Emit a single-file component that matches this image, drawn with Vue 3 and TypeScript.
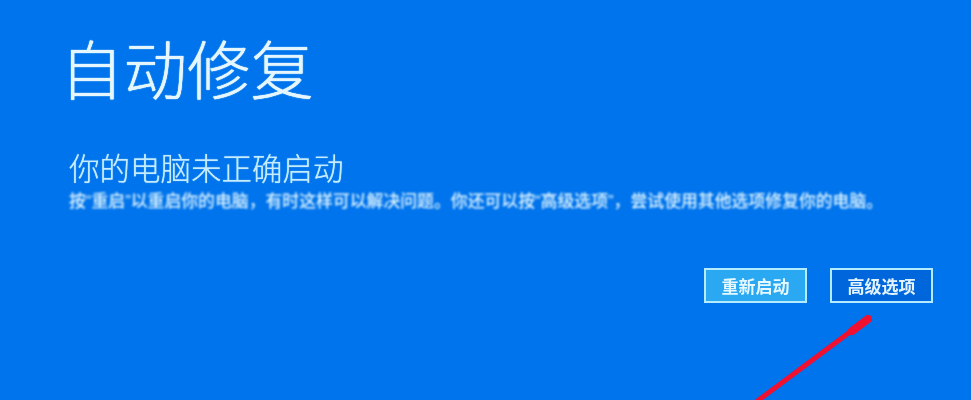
<script setup lang="ts">
const title = '自动修复'
const heading = '你的电脑未正确启动'
const body = '按“重启”以重启你的电脑，有时这样可以解决问题。你还可以按“高级选项”，尝试使用其他选项修复你的电脑。'
const actions = [
  { label: '重新启动', primary: true },
  { label: '高级选项', primary: false },
]
</script>

<template>
  <main class="screen">
    <h1 class="title">{{ title }}</h1>
    <h2 class="heading">{{ heading }}</h2>
    <p class="body">{{ body }}</p>
    <div class="actions">
      <button
        v-for="a in actions"
        :key="a.label"
        class="btn"
        :class="{ primary: a.primary }"
      >{{ a.label }}</button>
    </div>
    <svg class="arrow" viewBox="0 0 971 400" width="971" height="400" aria-hidden="true">
      <path d="M866 320 L752 405" stroke="#f01030" stroke-width="5" stroke-linecap="round" fill="none" />
      <path d="M868 319 L852 331" stroke="#f01030" stroke-width="8" stroke-linecap="round" fill="none" />
    </svg>
  </main>
</template>

<style>
html, body { margin: 0; background: #0074ec; }
</style>

<style scoped>
.screen {
  position: relative;
  width: 971px;
  height: 400px;
  overflow: hidden;
  box-sizing: border-box;
  padding: 26px 38px 0 60px;
  background: #0074ec;
  color: #e6f6ff;
  font-family: "Noto Sans CJK SC", "Noto Sans", sans-serif;
}
.title {
  margin: 0;
  font-size: 63.5px;
  line-height: 80px;
  font-weight: 300;
  filter: blur(0.6px);
  text-shadow: 0 0 1px #d8f4ff, 0 0 1px #d8f4ff;
}
.heading {
  margin: 43px 0 0 9px;
  font-size: 30.5px;
  line-height: 36px;
  font-weight: 300;
  color: #c4ecff;
  filter: blur(0.6px);
  text-shadow: 0 0 1px #c4ecff;
}
.body {
  margin: 6px 0 0 9px;
  font-family: "Liberation Sans", "Noto Sans CJK SC", sans-serif;
  font-size: 16.85px;
  line-height: 22px;
  white-space: nowrap;
  color: #e0f6ff;
  font-weight: 500;
  filter: blur(0.8px);
}
.actions {
  display: flex;
  justify-content: flex-end;
  gap: 23px;
  margin-top: 55px;
}
.btn {
  width: 103px;
  height: 35px;
  box-sizing: border-box;
  border: 2px solid #b4ecff;
  background: #0066dc;
  color: #e4f4ff;
  font: inherit;
  font-size: 17px;
  font-weight: 700;
  padding: 0;
  filter: blur(0.7px);
}
.btn.primary {
  background: #2ba8f2;
  color: #e4f8ff;
}
.arrow {
  position: absolute;
  inset: 0;
  filter: blur(0.6px);
}
</style>
